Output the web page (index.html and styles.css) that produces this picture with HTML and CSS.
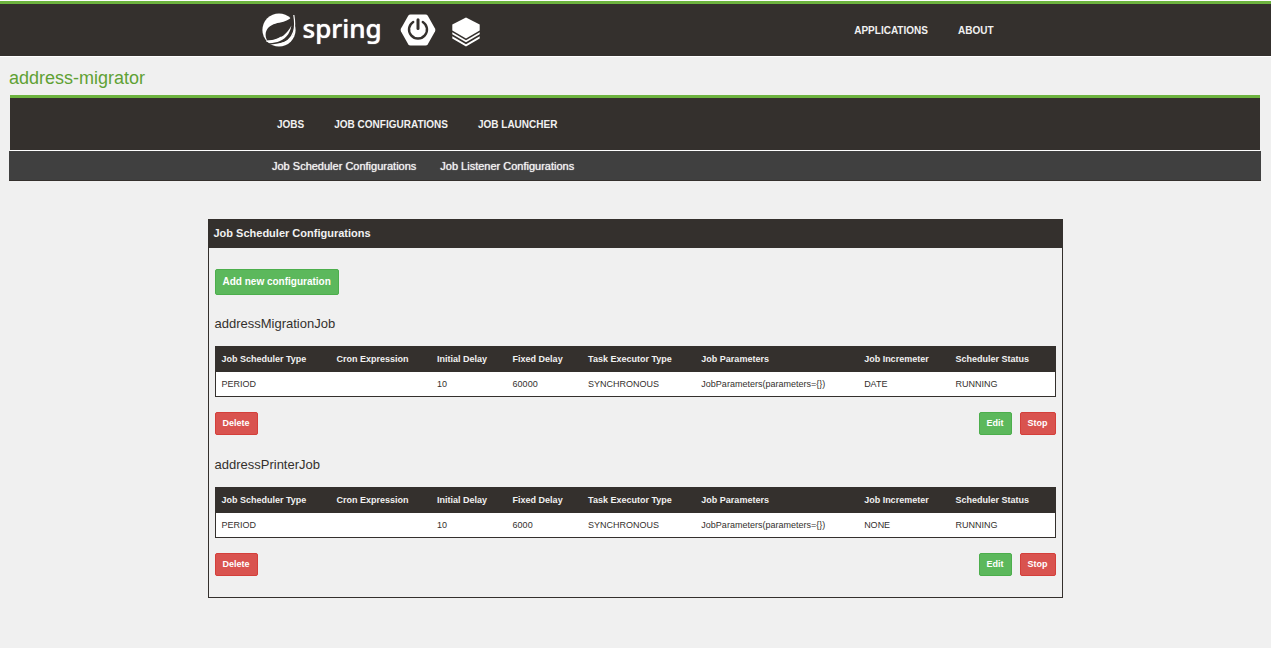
FILE: index.html
```html
<!DOCTYPE html>
<html lang="en">
<head>
<meta charset="utf-8">
<title>address-migrator</title>
<link rel="stylesheet" href="styles.css">
</head>
<body>
<header class="topbar">
  <div class="container">
    <a class="brand" href="#">
      <svg class="leaf" viewBox="0 0 34 34" aria-hidden="true">
        <circle cx="17" cy="17" r="16.6" fill="#fff"/>
        <path d="M31.600 1C29.500 5.200 26 7.600 21.500 8.700C16 10 10.500 10.500 6.500 14.500C2.800 18.500 3 23.500 5.200 27.600C8.400 27.500 12 27 15 26C21.500 23.700 26 19.300 29.400 12.600C28 21.500 22.500 27.200 15.500 29C12 29.900 8.500 30.300 4.800 30.500L6 31.400C11 31.500 17 30.900 22 29C28.500 26.200 32 22 32.200 15.500C32.400 10 32.300 5.800 31.600 1Z" fill="#34302d"/>
        <path d="M31.800 2C32.800 8 33.400 13.500 31.500 19C29.200 26 23.500 30.200 16.500 31.600" fill="none" stroke="#fff" stroke-width="1.200"/>
        <path d="M4.500 28.400C9 28.500 15 27.100 19.500 24.200" fill="none" stroke="#fff" stroke-width="1.400"/>
      </svg>
      <span class="wordmark">spring</span>
    </a>
    <svg class="boot" viewBox="0 0 36 32" aria-hidden="true">
      <path d="M10.500 0.500H25.500Q27 0.500 27.800 1.800L35 14.500Q35.800 16 35 17.500L27.800 30.200Q27 31.500 25.500 31.500H10.500Q9 31.500 8.200 30.200L1 17.500Q0.200 16 1 14.500L8.200 1.800Q9 0.500 10.500 0.500Z" fill="#fff"/>
      <path d="M13.200 7.900A9 9 0 1 0 22.800 7.900" fill="none" stroke="#34302d" stroke-width="2.400" stroke-linecap="round"/>
      <path d="M18 5.800V14.500" stroke="#34302d" stroke-width="3" stroke-linecap="round"/>
    </svg>
    <svg class="batch" viewBox="0 0 28 30" aria-hidden="true">
      <path d="M14 0.500L27.700 7.500V13.500L14 21.500L0.300 13.500V7.500Z" fill="#fff"/>
      <path d="M0.300 15.300L14 23.300L27.700 15.300V17.300L14 25.300L0.300 17.300ZM0.300 19.300L14 27.300L27.700 19.300V21.400L14 29.600L0.300 21.400Z" fill="#fff"/>
    </svg>
    <nav class="links topnav">
      <a href="#">APPLICATIONS</a>
      <a href="#">ABOUT</a>
    </nav>
  </div>
</header>
<main>
  <h1 class="appname">address-migrator</h1>
  <div class="menubar">
    <nav class="container links">
      <a href="#">JOBS</a>
      <a href="#">JOB CONFIGURATIONS</a>
      <a href="#">JOB LAUNCHER</a>
    </nav>
  </div>
  <div class="submenu">
    <nav class="container sublinks">
      <a href="#">Job Scheduler Configurations</a>
      <a href="#">Job Listener Configurations</a>
    </nav>
  </div>
  <section class="panel">
    <h2 class="panel-title">Job Scheduler Configurations</h2>
    <div class="panel-body">
      <button class="btn btn-add" type="button">Add new configuration</button>
      <h3 class="jobname">addressMigrationJob</h3>
      <table class="jobs">
        <colgroup><col class="c-type"><col class="c-cron"><col class="c-delay"><col class="c-delay"><col class="c-exec"><col class="c-params"><col class="c-inc"><col></colgroup>
        <thead><tr><th>Job Scheduler Type</th><th>Cron Expression</th><th>Initial Delay</th><th>Fixed Delay</th><th>Task Executor Type</th><th>Job Parameters</th><th>Job Incremeter</th><th>Scheduler Status</th></tr></thead>
        <tbody><tr><td>PERIOD</td><td></td><td>10</td><td>60000</td><td>SYNCHRONOUS</td><td>JobParameters(parameters={})</td><td>DATE</td><td>RUNNING</td></tr></tbody>
      </table>
      <div class="actions">
        <button class="btn btn-danger" type="button">Delete</button>
        <div class="group">
          <button class="btn" type="button">Edit</button>
          <button class="btn btn-danger" type="button">Stop</button>
        </div>
      </div>
      <h3 class="jobname">addressPrinterJob</h3>
      <table class="jobs">
        <colgroup><col class="c-type"><col class="c-cron"><col class="c-delay"><col class="c-delay"><col class="c-exec"><col class="c-params"><col class="c-inc"><col></colgroup>
        <thead><tr><th>Job Scheduler Type</th><th>Cron Expression</th><th>Initial Delay</th><th>Fixed Delay</th><th>Task Executor Type</th><th>Job Parameters</th><th>Job Incremeter</th><th>Scheduler Status</th></tr></thead>
        <tbody><tr><td>PERIOD</td><td></td><td>10</td><td>6000</td><td>SYNCHRONOUS</td><td>JobParameters(parameters={})</td><td>NONE</td><td>RUNNING</td></tr></tbody>
      </table>
      <div class="actions">
        <button class="btn btn-danger" type="button">Delete</button>
        <div class="group">
          <button class="btn" type="button">Edit</button>
          <button class="btn btn-danger" type="button">Stop</button>
        </div>
      </div>
    </div>
  </section>
</main>
</body>
</html>
```
FILE: styles.css
```css
* { box-sizing: border-box; }
body {
  margin: 0;
  background: #f0f0f0;
  color: #34302d;
  font: 11px/16px "Liberation Sans", Arial, sans-serif;
}
a { color: #f1f1f1; text-decoration: none; }
.topbar {
  height: 57px;
  border-top: 1px solid #fff;
  border-bottom: 1px solid #fff;
  background: #34302d;
  box-shadow: inset 0 3px #6db33f;
}
.container {
  display: flex;
  align-items: center;
  width: 100%;
  max-width: 750px;
  margin: 0 auto;
}
.topbar .container { height: 100%; padding-top: 3px; }
.brand { display: flex; align-items: center; gap: 7px; margin: 0 18px 0 1px; }
.leaf { width: 34px; height: 34px; }
.wordmark {
  color: #fff;
  font: 500 26px/34px "Noto Sans", sans-serif;
  height: 38px;
  text-shadow: 0 0 1px #fff;
}
.boot { width: 36px; height: 32px; margin-right: 16px; }
.batch { width: 28px; height: 30px; margin-top: 4px; }
.links { gap: 30px; padding: 2px 17px 0; font-size: 10px; font-weight: 700; }
.topnav { display: flex; margin-left: auto; }
main { padding: 0 10px 20px 9px; }
.appname {
  margin: 0;
  padding: 9px 0 5px;
  color: #5fa134;
  font-size: 18px;
  line-height: 24px;
  font-weight: 400;
}
.menubar {
  display: flex;
  height: 56px;
  margin: 0 1px;
  border-top: 3px solid #6db33f;
  border-bottom: 1px solid #fff;
  background: #34302d;
}
.submenu {
  display: flex;
  height: 30px;
  background: #404040;
  border-bottom: 1px solid #34302d;
}
.sublinks { gap: 24px; padding: 0 12px; text-shadow: 0 0 1px #f1f1f1; }
.panel {
  max-width: 855px;
  margin: 38px auto 0;
  border: 1px solid #34302d;
}
.panel-title {
  margin: 0;
  padding: 5px 5px 7px;
  background: #34302d;
  color: #f1f1f1;
  font-size: 11px;
  line-height: 16px;
}
.panel-body { padding: 21px 6px 20px; }
.btn {
  height: 23px;
  padding: 0 7px 1px;
  border: 1px solid #4cae4c;
  border-radius: 2px;
  background: #5cb85c;
  color: #fff;
  font: 700 9px/16px "Liberation Sans", Arial, sans-serif;
}
.btn-danger { background: #d9534f; border-color: #d43f3a; }
.btn-add {
  display: block;
  height: 26px;
  font-size: 10px;
}
.jobname {
  margin: 0;
  padding: 20px 0 13px;
  font-size: 13px;
  line-height: 18px;
  font-weight: 400;
}
.jobs {
  width: 100%;
  table-layout: fixed;
  border: 1px solid #34302d;
  border-spacing: 0;
  background: #fff;
  font-size: 9px;
  line-height: 14px;
}
.jobs th, .jobs td { padding: 5px 0 5px 6px; height: 24px; text-align: left; white-space: nowrap; }
.jobs th { height: 25px; padding: 5px 0 6px 6px; background: #34302d; color: #f1f1f1; }
.c-type { width: 13.7%; }
.c-cron { width: 12%; }
.c-delay { width: 9%; }
.c-exec { width: 13.5%; }
.c-params { width: 19.4%; }
.c-inc { width: 10.9%; }
.actions { display: flex; justify-content: space-between; padding: 15px 0 1px; }
.group { display: flex; gap: 8px; }
```
